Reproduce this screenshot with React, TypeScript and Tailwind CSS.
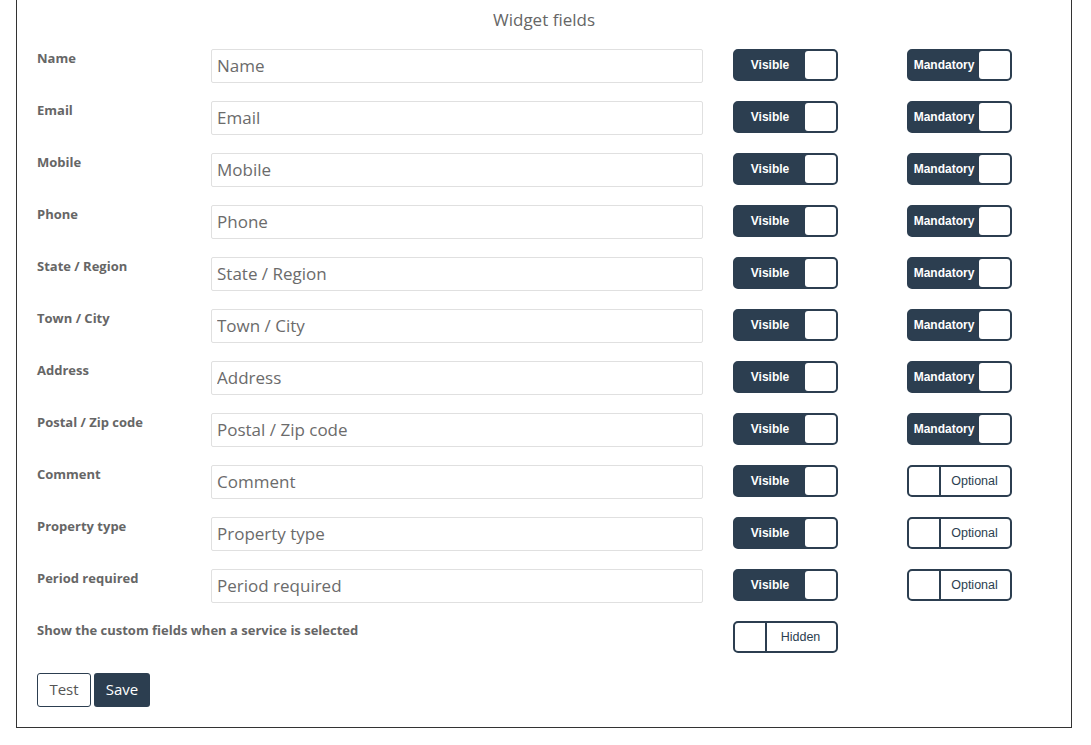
import React from "react";

const fields: { label: string; mandatory: boolean }[] = [
  { label: "Name", mandatory: true },
  { label: "Email", mandatory: true },
  { label: "Mobile", mandatory: true },
  { label: "Phone", mandatory: true },
  { label: "State / Region", mandatory: true },
  { label: "Town / City", mandatory: true },
  { label: "Address", mandatory: true },
  { label: "Postal / Zip code", mandatory: true },
  { label: "Comment", mandatory: false },
  { label: "Property type", mandatory: false },
  { label: "Period required", mandatory: false },
];

function ToggleOn({ text }: { text: string }) {
  return (
    <div className="flex h-[32px] w-[105px] rounded-[5px] border-2 border-[#2c3e50] bg-[#2c3e50]">
      <span
        className="flex flex-1 items-center justify-center text-[12px] font-bold text-white"
        style={{ fontFamily: '"Liberation Sans", Arial, sans-serif' }}
      >
        {text}
      </span>
      <span className="w-[31px] rounded-[3px] bg-white" />
    </div>
  );
}

function ToggleOff({ text }: { text: string }) {
  return (
    <div className="flex h-[32px] w-[105px] rounded-[5px] border-2 border-[#2c3e50] bg-white">
      <span className="w-[32px] border-r-2 border-[#2c3e50]" />
      <span
        className="flex flex-1 items-center justify-center pr-[2px] text-[12.5px] text-[#2c3e50]"
        style={{ fontFamily: '"Liberation Sans", Arial, sans-serif' }}
      >
        {text}
      </span>
    </div>
  );
}

export default function App() {
  return (
    <div className="bg-white" style={{ fontFamily: '"Open Sans", sans-serif' }}>
      <div className="ml-[16px] h-[728px] w-[1056px] border-x border-b border-[#333]">
        <div className="pt-[8px] text-center text-[17px] leading-[24px] text-[#666]">
          Widget fields
        </div>
        <div className="mt-[17px] pl-[20px]">
          {fields.map((f) => (
            <div key={f.label} className="mb-[18px] flex h-[34px] items-start">
              <div className="w-[174px] text-[13px] font-bold leading-[18px] text-[#666]">
                {f.label}
              </div>
              <input
                readOnly
                placeholder={f.label}
                className="h-[34px] w-[492px] rounded-[2px] border border-[#e0e0e0] px-[5px] pb-[2px] text-[17px] text-[#555] outline-none placeholder:text-[#6b6b6b]"
              />
              <div className="ml-[30px]">
                <ToggleOn text="Visible" />
              </div>
              <div className="ml-[69px]">
                {f.mandatory ? <ToggleOn text="Mandatory" /> : <ToggleOff text="Optional" />}
              </div>
            </div>
          ))}
          <div className="flex h-[32px] items-start">
            <div className="w-[696px] text-[13px] font-bold leading-[18px] text-[#666]">
              Show the custom fields when a service is selected
            </div>
            <ToggleOff text="Hidden" />
          </div>
          <div className="mt-[20px] flex gap-[3px]">
            <button className="h-[34px] w-[54px] rounded-[3px] border border-[#2c3e50] bg-white pb-[2px] text-[15px] text-[#555]">
              Test
            </button>
            <button className="h-[34px] w-[56px] rounded-[3px] bg-[#2c3e50] pb-[2px] text-[15px] text-white">
              Save
            </button>
          </div>
        </div>
      </div>
    </div>
  );
}
